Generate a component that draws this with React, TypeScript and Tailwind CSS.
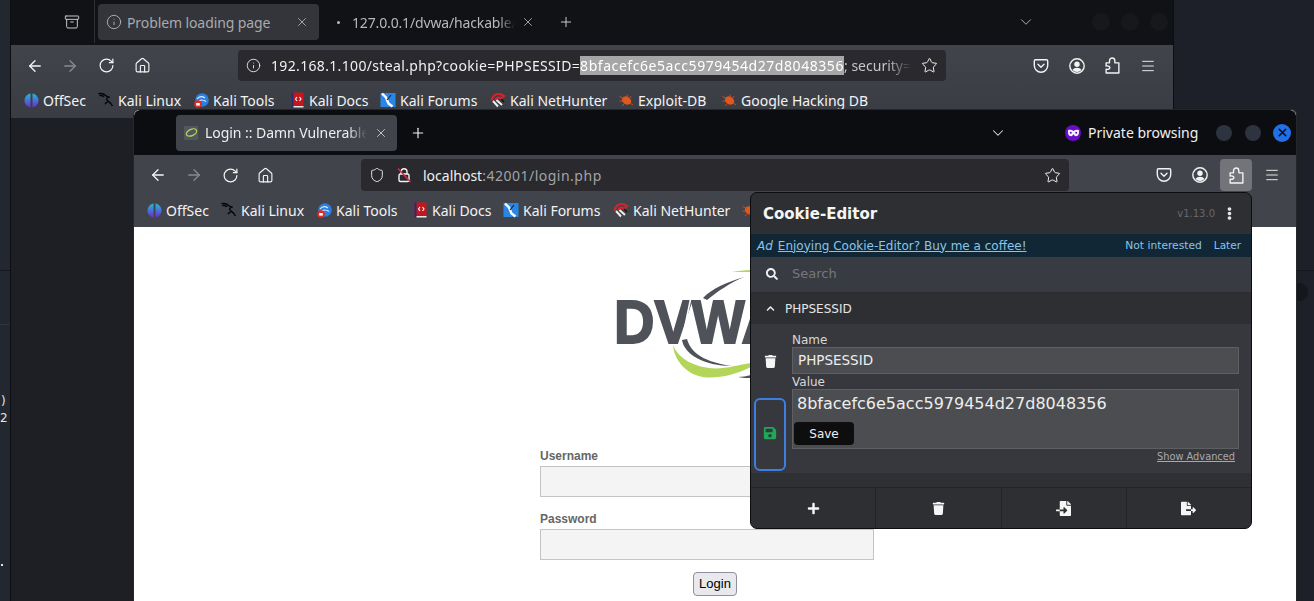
import React from "react";
import { ArrowLeft, ArrowRight, RotateCw, Home, Info, Star, Menu, X, Plus, ChevronDown, Shield, Archive } from "lucide-react";
import { FaTrash, FaSave, FaPlus, FaFileImport, FaFileExport, FaSearch, FaChevronUp, FaEllipsisV } from "react-icons/fa";

const Puzzle = () => (
  <svg width="15" height="17" viewBox="0 0 14 16" fill="none" stroke="#f3f3f3" strokeWidth="1.300" strokeLinejoin="round">
    <path d="M1 5.500h3.200V3.500C4.200 2 5.300 1 6.700 1s2.500 1 2.500 2.500v2h3.800V15H1v-3.500c2.700.5 3.500-.8 3.500-1.500S3.700 8 1 8.500z" />
  </svg>
);
const Pocket = () => (
  <svg width="16" height="16" viewBox="0 0 16 16" fill="none" stroke="#f3f3f3" strokeWidth="1.400" strokeLinejoin="round" strokeLinecap="round">
    <path d="M2.500 1.800h11c.7 0 1.200.5 1.200 1.200v4.500c0 3.700-3 6.700-6.700 6.700s-6.700-3-6.700-6.700V3c0-.7.5-1.200 1.200-1.200z" />
    <path d="M5 6.300l3 2.900 3-2.900" />
  </svg>
);
const Account = () => (
  <svg width="16" height="16" viewBox="0 0 16 16">
    <circle cx="8" cy="8" r="7.200" fill="none" stroke="#f3f3f3" strokeWidth="1.400" />
    <circle cx="8" cy="6.300" r="2.700" fill="#f3f3f3" />
    <path d="M3.500 12c1-1.600 2.500-2.300 4.500-2.300s3.500.7 4.500 2.300c-1.200 1.300-2.700 2-4.500 2s-3.300-.7-4.500-2z" fill="#f3f3f3" />
  </svg>
);
const Lock = () => (
  <svg width="16" height="16" viewBox="0 0 16 16" fill="none">
    <path d="M5 7V4.800C5 3 6.300 1.800 8 1.800s3 1.200 3 3V7" stroke="#f3f3f3" strokeWidth="1.400" />
    <rect x="3" y="7" width="10" height="7.500" rx="1.500" stroke="#f3f3f3" strokeWidth="1.400" />
    <path d="M2 1.500l12.500 13.500" stroke="#e22850" strokeWidth="1.400" />
  </svg>
);
const OffSecIcon = () => (
  <svg width="15" height="15" viewBox="0 0 15 15">
    <defs>
      <linearGradient id="og" x1="0" y1="0" x2="0" y2="1">
        <stop offset="0" stopColor="#2ab7d8" />
        <stop offset="1" stopColor="#6a2bd0" />
      </linearGradient>
    </defs>
    <path d="M6.500 0.500v14C3 13.800.5 11 .5 7.500S3 1.200 6.500.5z" fill="url(#og)" />
    <path d="M8.500 0.500v14c3.500-.7 6-3.500 6-7s-2.500-6.300-6-7z" fill="url(#og)" />
  </svg>
);
const KaliIcon = () => (
  <svg width="17" height="16" viewBox="0 0 17 16" fill="none" stroke="#050505" strokeWidth="1.500">
    <path d="M0.500 1.300c3-.6 6 .3 8 2.200 1.500 1.400 2.500 1.400 3.800 1.100-2 1-3.800 1.400-2.800 3.400 1 1.800 4.500 2.300 5.800 6.500" />
    <path d="M1.500 3.300c2-.4 3.500 0 5 1.200" />
    <path d="M10.500 10c-1.600.5-2.500 1.300-3 2.600" />
  </svg>
);
const ToolsIcon = () => (
  <svg width="15" height="15" viewBox="0 0 15 15">
    <circle cx="8" cy="7" r="6.800" fill="#2a7fe0" />
    <path d="M3 6c2-2.500 5-3 8-1M5 8c2-1.500 4-1.500 7 .5" stroke="#dfefff" strokeWidth="1.200" fill="none" />
    <circle cx="4" cy="11" r="3.800" fill="#e02b20" />
    <rect x="2.200" y="10" width="3.600" height="2.600" fill="#fff" />
  </svg>
);
const DocsIcon = () => (
  <svg width="13" height="16" viewBox="0 0 13 16">
    <rect x="0.500" y="0.500" width="12" height="14" fill="#c4161c" />
    <rect x="0.500" y="0.500" width="2" height="15" fill="#1f2f78" />
    <rect x="2.500" y="14" width="10" height="1.500" fill="#e8e8e8" />
    <path d="M6 5L4.500 7 6 9M8.500 5L10 7 8.500 9" stroke="#fff" strokeWidth="1.100" fill="none" />
  </svg>
);
const ForumsIcon = () => (
  <svg width="16" height="16" viewBox="0 0 16 16">
    <rect x="0.500" y="1" width="15" height="14" fill="#2a86e6" />
    <path d="M2 1.500l4 4 2.500 6 4 3" stroke="#fff" strokeWidth="2.400" fill="none" />
    <path d="M11 3l-4 5" stroke="#10243c" strokeWidth="1.200" />
  </svg>
);
const HunterIcon = () => (
  <svg width="16" height="16" viewBox="0 0 16 16" fill="none">
    <path d="M1.500 8.500c1-4 4-6.500 7-6.500 2 0 4 .8 5.500 2l-3 2.500c-2-1.500-5-1-5.800 1.500" stroke="#d8232a" strokeWidth="2.200" />
    <path d="M3 9l5 5.500M6.500 8l5.500 5" stroke="#eee" strokeWidth="2" />
    <path d="M11 7l3 3" stroke="#111" strokeWidth="1.400" />
  </svg>
);
const BugIcon = () => (
  <svg width="16" height="14" viewBox="0 0 16 14">
    <ellipse cx="8.500" cy="7.500" rx="5" ry="3.800" transform="rotate(30 8.500 7.500)" fill="#e2581c" />
    <path d="M1.500 3.500l4 2M1.500 8l4 .5M4 13l3-3M9 1.500l1 3M13 3l-1 2M15 12l-3-2" stroke="#c9481a" strokeWidth="1" />
  </svg>
);
const DvwaFav = () => (
  <span className="flex h-[14px] w-[14px] items-center justify-center bg-[#53565c]">
    <svg width="13" height="11" viewBox="0 0 13 11" fill="none">
      <ellipse cx="6.500" cy="5.500" rx="5.500" ry="3.200" transform="rotate(-25 6.500 5.500)" stroke="#b3d65a" strokeWidth="1.300" />
    </svg>
  </span>
);

const Bookmark = ({ icon, label, w }: { icon: React.ReactNode; label: string; w: string }) => (
  <div className={`flex items-center gap-[4px] shrink-0 ${w}`}>
    <span className="flex h-4 w-4 shrink-0 items-center justify-center">{icon}</span>
    <span className="whitespace-nowrap text-[14px] text-[#f3f3f3]">{label}</span>
  </div>
);

const Bookmarks = () => (
  <div className="flex h-[30px] items-center">
    <Bookmark icon={<OffSecIcon />} label="OffSec" w="w-[75px]" />
    <Bookmark icon={<KaliIcon />} label="Kali Linux" w="w-[95px]" />
    <Bookmark icon={<ToolsIcon />} label="Kali Tools" w="w-[96px]" />
    <Bookmark icon={<DocsIcon />} label="Kali Docs" w="w-[91px]" />
    <Bookmark icon={<ForumsIcon />} label="Kali Forums" w="w-[110px]" />
    <Bookmark icon={<HunterIcon />} label="Kali NetHunter" w="w-[128px]" />
    <Bookmark icon={<BugIcon />} label="Exploit-DB" w="w-[103px]" />
    <Bookmark icon={<BugIcon />} label="Google Hacking DB" w="w-[170px]" />
  </div>
);

const Dot = ({ c }: { c: string }) => <span className={`block rounded-full ${c}`} />;

const PopupButton = ({ children, border }: { children: React.ReactNode; border?: boolean }) => (
  <div className={`flex flex-1 items-center justify-center text-[#f5f5f5] ${border ? "border-l border-[#232428]" : ""}`}>{children}</div>
);

export default function App() {
  const ui = "font-['Noto_Sans',sans-serif]";
  const dv = "font-['DejaVu_Sans',sans-serif]";
  return (
    <div className={`relative h-[601px] w-[1314px] overflow-hidden bg-[#1d2029] ${ui}`}>
      {/* desktop remnants */}
      <div className="absolute left-0 top-0 h-[601px] w-[10px] bg-[#232730]">
        <div className="absolute left-0 top-[270px] h-px w-[10px] bg-[#15171c]" />
        <div className="absolute left-0 top-[324px] h-px w-[10px] bg-[#30343c]" />
        <span className={`absolute left-[1px] top-[393px] text-[12px] leading-[16px] text-[#e4e4e4] ${dv}`}>)</span>
        <span className={`absolute left-0 top-[410px] text-[12px] leading-[16px] text-[#e4e4e4] ${dv}`}>2</span>
        <span className="absolute left-[1px] top-[564px] h-[2px] w-[2px] bg-[#e4e4e4]" />
      </div>
      <div className="absolute left-[1296px] top-[270px] h-px w-[18px] bg-[#15171c]" />
      <div className="absolute left-[1290px] top-[283px] h-[18px] w-[18px] rounded-full bg-[#15171c]" />

      {/* back window */}
      <div className="absolute left-[10px] top-0 flex h-[601px] w-[1164px] flex-col border-x border-[#0d0e11] bg-[#1e1f24]">
        <div className="flex h-[45px] items-center bg-[#111216] pb-[5px] pt-[4px]">
          <div className="flex w-[83px] justify-end pr-[14px]">
            <Archive size={16} strokeWidth={1.4} className="text-[#d5d5d7]" />
          </div>
          <div className="h-[45px] w-px -translate-y-[2px] bg-[#2e2f34]" />
          <div className="ml-[3px] flex h-[36px] w-[221px] items-center rounded-[4px] bg-[#33353b] pl-[8px] pr-[10px]">
            <Info size={16} strokeWidth={1.3} className="text-[#b8b9bc]" />
            <span className="ml-[5px] flex-1 whitespace-nowrap text-[14px] tracking-[-0.1px] text-[#a9aaad]">Problem loading page</span>
            <X size={14} strokeWidth={1.3} className="text-[#c5c6c8]" />
          </div>
          <span className="ml-[18px] h-[3px] w-[3px] rounded-full bg-[#b8b9bc]" />
          <span className="ml-[12px] w-[163px] overflow-hidden whitespace-nowrap text-[14px] tracking-[-0.15px] text-[#b7b8bb] [mask-image:linear-gradient(to_right,black_90%,transparent)]">127.0.0.1/dvwa/hackable/uploads</span>
          <X size={14} strokeWidth={1.3} className="ml-[6px] text-[#c5c6c8]" />
          <Plus size={16} strokeWidth={1.4} className="ml-[23px] text-[#d5d5d7]" />
          <ChevronDown size={18} strokeWidth={1.3} className="ml-[443px] text-[#b0b1b4]" />
          <div className="ml-[57px] flex gap-[11px]">
            <Dot c="h-[18px] w-[18px] bg-[#17181c]" />
            <Dot c="h-[18px] w-[18px] bg-[#17181c]" />
            <Dot c="h-[18px] w-[18px] bg-[#17181c]" />
          </div>
        </div>
        <div className="bg-gradient-to-b from-[#42444c] to-[#3a3c44]">
          <div className="flex h-[41px] items-center pl-[15px]">
            <ArrowLeft size={18} strokeWidth={1.7} className="text-[#f5f5f5]" />
            <ArrowRight size={18} strokeWidth={1.7} className="ml-[17px] text-[#8a8b90]" />
            <RotateCw size={17} strokeWidth={1.7} className="ml-[19px] text-[#f5f5f5]" />
            <Home size={17} strokeWidth={1.6} className="ml-[19px] text-[#f5f5f5]" />
            <div className="ml-[87px] flex h-[31px] w-[708px] items-center rounded-[4px] bg-[#29292e] pl-[8px] pr-[8px]">
              <Info size={15} strokeWidth={1.4} className="text-[#f0f0f0]" />
              <div className="ml-[10px] w-[641px] overflow-hidden whitespace-nowrap text-[14px] tracking-[0.34px] text-[#f1f1f1] [mask-image:linear-gradient(to_right,black_96%,transparent)]">
                192.168.1.100/steal.php?cookie=PHPSESSID=<span className="bg-[#a6a6a6] tracking-[0.56px] text-white">8bfacefc6e5acc5979454d27d8048356</span>
                <span className="tracking-[0px] text-[#c6c6c8]">; security=xxxx</span>
              </div>
              <Star size={17} strokeWidth={1.4} className="ml-auto text-[#f3f3f3]" />
            </div>
            <div className="ml-[87px] flex items-center gap-[20px]">
              <Pocket />
              <Account />
              <Puzzle />
              <Menu size={16} strokeWidth={1.4} className="text-[#f3f3f3]" />
            </div>
          </div>
          <div className="-mt-[1px] h-[33px] pl-[12px]">
            <Bookmarks />
          </div>
        </div>
      </div>

      {/* front window */}
      <div className="absolute left-[133px] top-[109px] flex h-[492px] w-[1164px] flex-col rounded-t-[6px] border-x border-t border-[#26272b] bg-white">
        <div className="flex h-[45px] shrink-0 items-center rounded-t-[6px] bg-[#0c0d11]">
          <div className="ml-[42px] flex h-[36px] w-[221px] items-center rounded-[4px] bg-[#42444c] pl-[8px] pr-[8px]">
            <DvwaFav />
            <span className="ml-[7px] w-[162px] overflow-hidden whitespace-nowrap text-[14px] tracking-[-0.05px] text-[#eeeeef] [mask-image:linear-gradient(to_right,black_88%,transparent)]">Login :: Damn Vulnerable Web</span>
            <X size={14} strokeWidth={1.3} className="ml-[7px] text-[#e6e6e6]" />
          </div>
          <Plus size={16} strokeWidth={1.7} className="ml-[13px] text-[#f5f5f5]" />
          <ChevronDown size={18} strokeWidth={1.4} className="ml-[563px] text-[#e0e0e0]" />
          <span className="ml-[58px] flex h-[16px] w-[16px] items-center justify-center rounded-full bg-[#6a0dc7]">
            <svg width="13" height="8" viewBox="0 0 13 8">
              <path d="M1 1.200C3 .4 5 .8 6.500 2c1.500-1.200 3.500-1.600 5.500-.8.400 3-.6 6-3 6-1.300 0-2-1.300-2.500-2-.5.7-1.200 2-2.500 2-2.400 0-3.400-3-3-6z" fill="#f5f0ff" />
              <circle cx="3.800" cy="3.800" r="1" fill="#6a0dc7" />
              <circle cx="9.200" cy="3.800" r="1" fill="#6a0dc7" />
            </svg>
          </span>
          <span className="ml-[7px] whitespace-nowrap text-[14px] text-[#f0f0f0]">Private browsing</span>
          <div className="ml-[18px] flex items-center gap-[13px]">
            <Dot c="h-[16px] w-[16px] bg-[#2e3340]" />
            <Dot c="h-[16px] w-[16px] bg-[#2e3340]" />
            <span className="-ml-[1px] flex h-[18px] w-[18px] items-center justify-center rounded-full bg-[#2170e8]">
              <X size={13} strokeWidth={3} className="text-[#10131c]" />
            </span>
          </div>
        </div>
        <div className="flex h-[40px] shrink-0 items-center bg-[#42444c] pl-[15px]">
          <ArrowLeft size={18} strokeWidth={1.7} className="text-[#f5f5f5]" />
          <ArrowRight size={18} strokeWidth={1.7} className="ml-[18px] text-[#8a8b90]" />
          <RotateCw size={17} strokeWidth={1.7} className="ml-[19px] text-[#f5f5f5]" />
          <Home size={17} strokeWidth={1.6} className="ml-[18px] text-[#f5f5f5]" />
          <div className="ml-[87px] flex h-[32px] w-[708px] items-center rounded-[4px] bg-[#29292e] pl-[8px] pr-[8px]">
            <Shield size={16} strokeWidth={1.4} className="text-[#f0f0f0]" />
            <span className="ml-[11px]">
              <Lock />
            </span>
            <span className="ml-[11px] whitespace-nowrap text-[14px] text-[#f1f1f1]">
              localhost<span className="tracking-[0.5px] text-[#a2a3a6]">:42001/login.php</span>
            </span>
            <Star size={17} strokeWidth={1.4} className="ml-auto text-[#f3f3f3]" />
          </div>
          <div className="ml-[87px] flex items-center">
            <Pocket />
            <span className="ml-[20px]">
              <Account />
            </span>
            <span className="ml-[12px] flex h-[32px] w-[32px] items-center justify-center rounded-[4px] bg-[#72747a]">
              <Puzzle />
            </span>
            <Menu size={16} strokeWidth={1.4} className="ml-[12px] text-[#f3f3f3]" />
          </div>
        </div>
        <div className="h-[32px] shrink-0 overflow-hidden bg-[#42444c] pl-[12px]">
          <Bookmarks />
        </div>

        <div className="relative flex-1 overflow-hidden bg-white font-['Liberation_Sans',sans-serif]">
          <div className="ml-[481px] mt-[40px] h-[120px] w-[200px]">
            <svg width="200" height="120" viewBox="0 0 200 120" className="overflow-visible">
              <text x="-1" y="76" fontFamily="'Liberation Sans',sans-serif" fontWeight="700" fontSize="62" fill="#4f5359" stroke="#4f5359" strokeWidth="2" textLength="168" lengthAdjust="spacingAndGlyphs">DVWA</text>
              <path d="M76 30L66 78" stroke="#fff" strokeWidth="1.600" />
              <path d="M58 78C59 92 70 107 88 110c14 2 32-2 48-10v-4c-14 2-28 7-42 5-14-2-30-8-36-23z" fill="#b3d65a" />
              <path d="M67 73c2 14 22 26 50 26-20-3-40-9-45-27z" fill="#4f5359" />
              <path d="M88 31c8-9 24-16 41-21-14 6-26 14-37 23z" fill="#4f5359" />
              <path d="M117 5c6-1 12-2 19-2v2z" fill="#b3d65a" />
              <path d="M123 110c4 0 9-1 13-2v3c-4 0-9 0-13-1z" fill="#4f5359" />
            </svg>
          </div>
          <div className="ml-[406px] mt-[62px] w-[334px]">
            <div className="text-[12px] font-bold leading-[14px] text-[#666666]">Username</div>
            <div className="mt-[3px] h-[31px] border border-[#c4c4c4] bg-[#f4f4f4]" />
            <div className="mt-[15px] text-[12px] font-bold leading-[14px] text-[#666666]">Password</div>
            <div className="mt-[3px] h-[31px] border border-[#c4c4c4] bg-[#f4f4f4]" />
            <div className="mt-[12px] flex justify-center pl-[16px]">
              <div className="flex h-[24px] w-[44px] items-center justify-center rounded-[4px] border border-[#8f8f9d] bg-[#e9e9ed] text-[13px] text-black">Login</div>
            </div>
          </div>
        </div>
      </div>

      {/* cookie editor popup */}
      <div className={`absolute left-[750px] top-[192px] flex h-[337px] w-[502px] flex-col overflow-hidden rounded-[7px] border border-[#0c0d10] bg-[#2e2f33] text-[#f0f0f0] ${dv}`}>
        <div className="flex h-[41px] shrink-0 items-center pl-[12px] pr-[15px]">
          <span className="pt-[2px] text-[15px] font-bold leading-none text-[#f5f5f5]">Cookie-Editor</span>
          <span className="ml-auto text-[10px] text-[#66676b]">v1.13.0</span>
          <FaEllipsisV size={13} className="ml-[8px] text-[#e6e6e6]" />
        </div>
        <div className="flex h-[23px] shrink-0 items-center bg-[#112736] pl-[6px] pr-[10px] text-[#8cc4e4]">
          <span className="text-[12px] italic">Ad</span>
          <span className="ml-[5px] text-[12px] underline">Enjoying Cookie-Editor? Buy me a coffee!</span>
          <span className="ml-auto pt-[2px] text-[10.700px]">Not interested</span>
          <span className="ml-[12px] pt-[1px] text-[10.500px]">Later</span>
        </div>
        <div className="flex h-[36px] shrink-0 items-center border-b border-[#2b2c30] bg-[#393b43] pb-[2px] pl-[15px]">
          <FaSearch size={12} className="text-[#f0f0f0]" />
          <span className="ml-[14px] text-[13px] text-[#76777c]">Search</span>
        </div>
        <div className="flex h-[31px] shrink-0 items-center pl-[15px]">
          <FaChevronUp size={9} className="text-[#f0f0f0]" />
          <span className="ml-[10px] text-[12px] text-[#e6e6e6]">PHPSESSID</span>
        </div>
        <div className="flex h-[149px] shrink-0 bg-[#37383d]">
          <div className="flex w-[38px] shrink-0 flex-col items-center">
            <div className="flex h-[74px] items-center justify-center">
              <FaTrash size={13} className="text-[#f5f5f5]" />
            </div>
            <div className="flex h-[73px] w-[32px] items-center justify-center rounded-[6px] border-2 border-[#3c7fe0] pb-[3px]">
              <FaSave size={14} className="text-[#1fa855]" />
            </div>
          </div>
          <div className="ml-[3px] w-[447px] pt-[9px]">
            <div className="text-[12px] leading-[14px] text-[#d8d8d8]">Name</div>
            <div className="flex h-[27px] items-center border border-[#5e5f63] bg-[#4c4d50] pl-[5px] text-[13.500px] text-[#ededed]">PHPSESSID</div>
            <div className="mt-[1px] text-[12px] leading-[14px] text-[#d8d8d8]">Value</div>
            <div className="h-[60px] border border-[#5e5f63] bg-[#4c4d50] pl-[1px]">
              <div className="pl-[3px] pt-[3px] text-[16px] leading-[22px] text-[#ededed]">8bfacefc6e5acc5979454d27d8048356</div>
              <div className="mt-[7px] flex h-[23px] w-[60px] items-center justify-center rounded-[4px] bg-[#0e0e0f] text-[12px] text-[#f0f0f0]">Save</div>
            </div>
            <div className="pr-[4px] pt-[1px] text-right text-[9.800px] text-[#a8a9ac] underline">Show Advanced</div>
          </div>
        </div>
        <div className="h-[15px] shrink-0 border-b border-[#232428] bg-[#2f3034]" />
        <div className="flex flex-1">
          <PopupButton><FaPlus size={13} /></PopupButton>
          <PopupButton border><FaTrash size={13} /></PopupButton>
          <PopupButton border><FaFileImport size={15} /></PopupButton>
          <PopupButton border><FaFileExport size={15} /></PopupButton>
        </div>
      </div>
    </div>
  );
}
